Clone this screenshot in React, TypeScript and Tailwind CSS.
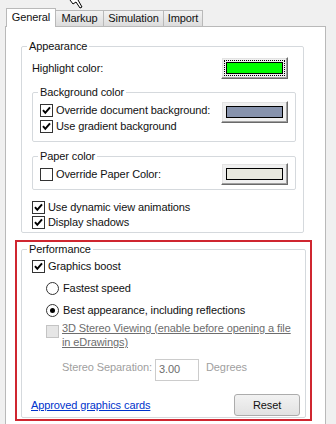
import React from "react";

function Check({ checked, disabled }: { checked?: boolean; disabled?: boolean }) {
  return (
    <span
      className={
        disabled
          ? "w-[13px] h-[13px] shrink-0 flex items-center justify-center border border-[#c4c4c4] bg-[#e6e6e6]"
          : "w-[13px] h-[13px] shrink-0 flex items-center justify-center border border-[#333333] bg-white"
      }
    >
      {checked && (
        <svg width="11" height="11" viewBox="0 0 11 11">
          <path d="M2 5.2 L4.3 7.8 L9 2.4" fill="none" stroke="#000" strokeWidth="2" />
        </svg>
      )}
    </span>
  );
}

function Radio({ checked }: { checked?: boolean }) {
  return (
    <span className="w-[13px] h-[13px] shrink-0 rounded-full border border-[#333333] bg-white flex items-center justify-center">
      {checked && <span className="w-[5px] h-[5px] rounded-full bg-black" />}
    </span>
  );
}

function ColorBtn({ color, focus }: { color: string; focus?: boolean }) {
  return (
    <div className="ml-auto w-[67px] h-[22px] shrink-0 bg-[#f0f0f0] border border-t-[#ffffff] border-l-[#ffffff] border-r-[#6a6a6a] border-b-[#6a6a6a] shadow-[inset_-1px_-1px_0_#a0a0a0,inset_1px_1px_0_#e3e3e3] p-[2px]">
      <div
        className={
          focus
            ? "w-full h-full border border-dotted border-black p-[1px]"
            : "w-full h-full border border-transparent p-[1px]"
        }
      >
        <div className="w-full h-full border border-black" style={{ backgroundColor: color }} />
      </div>
    </div>
  );
}

function Group({
  label,
  className,
  children,
}: {
  label: string;
  className: string;
  children: React.ReactNode;
}) {
  return (
    <fieldset className={"border border-[#d5d9dd] rounded-[2px] min-w-0 " + className}>
      <legend className="ml-[5px] px-[2px] leading-[13px]">{label}</legend>
      {children}
    </fieldset>
  );
}

export default function App() {
  return (
    <div
      className="relative w-[336px] h-[424px] overflow-hidden bg-[#f0f0f0] text-[11px] tracking-[-0.1px] leading-[13px] text-[#111111]"
      style={{ fontFamily: '"Liberation Sans", Arial, sans-serif' }}
    >
      {/* mouse cursor tail */}
      <svg className="absolute left-[68px] top-0" width="16" height="10" viewBox="0 0 16 10">
        <path d="M2 0 L5 4 L8 2 L12 8 L14 7 L10 0" fill="#fff" stroke="#000" strokeWidth="1" />
      </svg>

      {/* tab strip */}
      <div className="ml-[5px] w-[321px] h-[27px] flex items-end">
        <div className="w-[1px] h-[1px] border-b border-[#b9b9b9]" />
        <div className="w-[50px] h-[19px] border border-b-0 border-[#b9b9b9] bg-white flex items-start justify-center pt-[2px]">
          General
        </div>
        <div className="w-[48px] h-[17px] border-t border-r border-b border-[#b9b9b9] bg-linear-to-b from-[#f3f3f3] to-[#dcdcdc] flex items-center justify-center">
          Markup
        </div>
        <div className="w-[60px] h-[17px] border-t border-r border-b border-[#b9b9b9] bg-linear-to-b from-[#f3f3f3] to-[#dcdcdc] flex items-center justify-center">
          Simulation
        </div>
        <div className="w-[39px] h-[17px] border-t border-r border-b border-[#b9b9b9] bg-linear-to-b from-[#f3f3f3] to-[#dcdcdc] flex items-center justify-center">
          Import
        </div>
        <div className="flex-1 h-[1px] border-b border-[#b9b9b9]" />
      </div>

      {/* panel */}
      <div className="ml-[5px] w-[321px] h-[410px] border border-t-0 border-[#b9b9b9] bg-white pt-[13px]">
        <Group label="Appearance" className="ml-[15px] w-[283px] pb-[3px]">
          <div className="mt-[4px] h-[22px] flex items-center pl-[10px] pr-[15px]">
            <span>Highlight color:</span>
            <ColorBtn color="#00ff00" focus />
          </div>

          <Group label="Background color" className="mt-[7px] ml-[10px] w-[264px] pb-[8px]">
            <div className="mt-[2px] flex items-start pl-[7px] pr-[7px]">
              <div className="pt-[3px] flex flex-col gap-[3px]">
                <div className="flex items-center gap-[3px]">
                  <Check checked />
                  <span>Override document background:</span>
                </div>
                <div className="flex items-center gap-[3px]">
                  <Check checked />
                  <span>Use gradient background</span>
                </div>
              </div>
              <ColorBtn color="#8793ad" />
            </div>
          </Group>

          <Group label="Paper color" className="mt-[8px] ml-[10px] w-[264px] pb-[4px]">
            <div className="h-[22px] flex items-center pl-[7px] pr-[7px]">
              <div className="flex items-center gap-[3px]">
                <Check />
                <span>Override Paper Color:</span>
              </div>
              <ColorBtn color="#e8e8de" />
            </div>
          </Group>

          <div className="mt-[11px] pl-[10px] flex flex-col gap-[2px]">
            <div className="flex items-center gap-[3px]">
              <Check checked />
              <span>Use dynamic view animations</span>
            </div>
            <div className="flex items-center gap-[3px]">
              <Check checked />
              <span>Display shadows</span>
            </div>
          </div>
        </Group>

        {/* highlighted performance section */}
        <div className="mt-[7px] ml-[9px] w-[297px] border-2 border-[#cf2630] pt-[1px] pl-[4px] pr-[4px] pb-[1px]">
          <Group label="Performance" className="w-full pb-[1px]">
            <div className="mt-[4px] pl-[10px] flex items-center gap-[3px]">
              <Check checked />
              <span>Graphics boost</span>
            </div>
            <div className="mt-[9px] pl-[24px] flex items-center gap-[4px]">
              <Radio />
              <span>Fastest speed</span>
            </div>
            <div className="mt-[9px] pl-[24px] flex items-center gap-[4px]">
              <Radio checked />
              <span>Best appearance, including reflections</span>
            </div>
            <div className="mt-[4px] pl-[24px] flex items-start gap-[3px]">
              <div className="mt-[4px]">
                <Check disabled />
              </div>
              <span className="leading-[14px] text-[#6d6d6d] underline w-[230px]">
                3D Stereo Viewing (enable before opening a file in eDrawings)
              </span>
            </div>
            <div className="mt-[10px] pl-[40px] flex items-start">
              <span className="w-[93px] mt-[1px] leading-[14px] text-[#a0a0a0]">Stereo Separation:</span>
              <div className="w-[44px] h-[22px] border border-[#cccccc] bg-white pl-[3px] pt-[2px] leading-[14px] text-[#6d6d6d]">
                3.00
              </div>
              <span className="ml-[7px] mt-[1px] leading-[14px] text-[#a0a0a0]">Degrees</span>
            </div>
            <div className="mt-[13px] pl-[9px] pr-[5px] flex items-center">
              <span className="text-[#0033cc] underline">Approved graphics cards</span>
              <div className="ml-auto w-[66px] h-[22px] border border-[#acacac] rounded-[3px] bg-linear-to-b from-[#f2f2f2] to-[#e2e2e2] flex items-center justify-center">
                Reset
              </div>
            </div>
          </Group>
        </div>
      </div>
    </div>
  );
}
